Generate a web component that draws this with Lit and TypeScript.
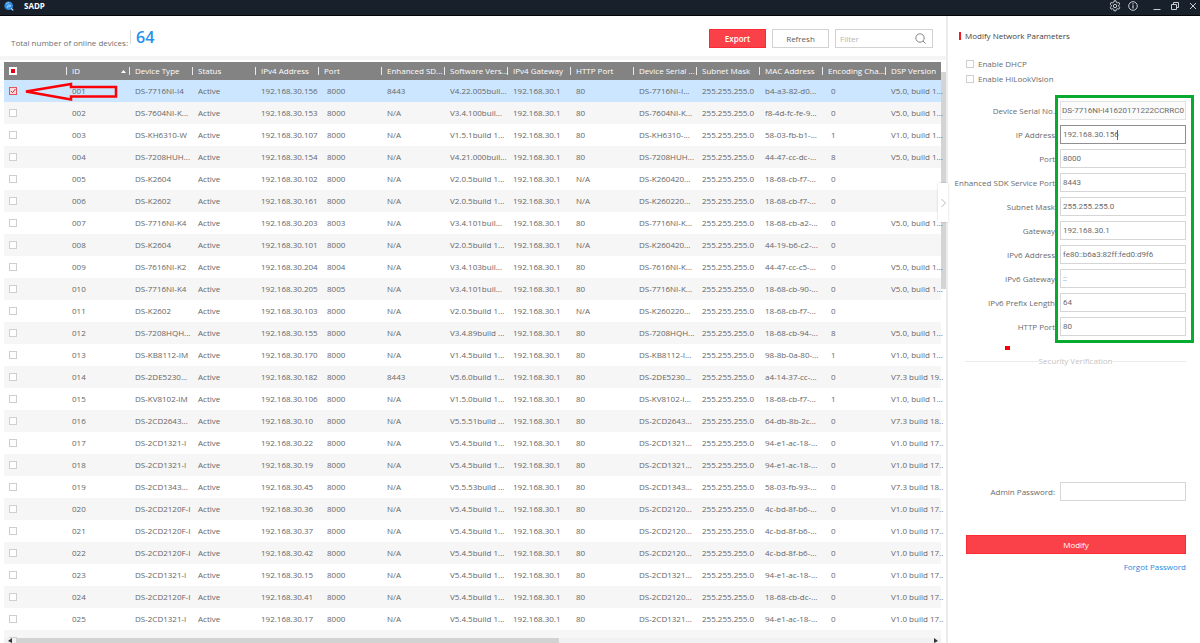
import { LitElement, html, css } from "lit";
import { customElement } from "lit/decorators.js";
import { classMap } from "lit/directives/class-map.js";

type Device = [
  type: string, host: number, port: string, sdk: string, software: string,
  http: string, serial: string, mac: string, channels: string, dsp: string,
];

const DEVICES: Device[] = [
  ["DS-7716NI-I4", 156, "8000", "8443", "V4.22.005buil...", "80", "DS-7716NI-I...", "b4-a3-82-d0...", "0", "V5.0, build 1..."],
  ["DS-7604NI-K...", 153, "8000", "N/A", "V3.4.100buil...", "80", "DS-7604NI-K...", "f8-4d-fc-fe-9...", "0", "V5.0, build 1..."],
  ["DS-KH6310-W", 107, "8000", "N/A", "V1.5.1build 1...", "80", "DS-KH6310-...", "58-03-fb-b1-...", "1", "V1.0, build 1..."],
  ["DS-7208HUH...", 154, "8000", "N/A", "V4.21.000buil...", "80", "DS-7208HUH...", "44-47-cc-dc-...", "8", "V5.0, build 1..."],
  ["DS-K2604", 102, "8000", "N/A", "V2.0.5build 1...", "N/A", "DS-K260420...", "18-68-cb-f7-...", "0", ""],
  ["DS-K2602", 161, "8000", "N/A", "V2.0.5build 1...", "N/A", "DS-K260220...", "18-68-cb-f7-...", "0", ""],
  ["DS-7716NI-K4", 203, "8003", "N/A", "V3.4.101buil...", "80", "DS-7716NI-K...", "18-68-cb-a2-...", "0", "V5.0, build 1..."],
  ["DS-K2604", 101, "8000", "N/A", "V2.0.5build 1...", "N/A", "DS-K260420...", "44-19-b6-c2-...", "0", ""],
  ["DS-7616NI-K2", 204, "8004", "N/A", "V3.4.103buil...", "80", "DS-7616NI-K...", "44-47-cc-c5-...", "0", "V5.0, build 1..."],
  ["DS-7716NI-K4", 205, "8005", "N/A", "V3.4.101buil...", "80", "DS-7716NI-K...", "18-68-cb-90-...", "0", "V5.0, build 1..."],
  ["DS-K2602", 103, "8000", "N/A", "V2.0.5build 1...", "N/A", "DS-K260220...", "18-68-cb-f7-...", "0", ""],
  ["DS-7208HQH...", 155, "8000", "N/A", "V3.4.89build ...", "80", "DS-7208HQH...", "18-68-cb-94-...", "8", "V5.0, build 1..."],
  ["DS-KB8112-IM", 170, "8000", "N/A", "V1.4.5build 1...", "80", "DS-KB8112-I...", "98-8b-0a-80-...", "1", "V1.0, build 1..."],
  ["DS-2DE5230...", 182, "8000", "8443", "V5.6.0build 1...", "80", "DS-2DE5230...", "a4-14-37-cc-...", "0", "V7.3 build 19.."],
  ["DS-KV8102-IM", 106, "8000", "N/A", "V1.5.0build 1...", "80", "DS-KV8102-I...", "18-68-cb-f7-...", "1", "V1.0, build 1..."],
  ["DS-2CD2643...", 10, "8000", "N/A", "V5.5.51build ...", "80", "DS-2CD2643...", "64-db-8b-2c...", "0", "V7.3 build 18.."],
  ["DS-2CD1321-I", 22, "8000", "N/A", "V5.4.5build 1...", "80", "DS-2CD1321...", "94-e1-ac-18-...", "0", "V1.0 build 17.."],
  ["DS-2CD1321-I", 19, "8000", "N/A", "V5.4.5build 1...", "80", "DS-2CD1321...", "94-e1-ac-18-...", "0", "V1.0 build 17.."],
  ["DS-2CD1343...", 45, "8000", "N/A", "V5.5.53build ...", "80", "DS-2CD1343...", "58-03-fb-93-...", "0", "V7.3 build 18.."],
  ["DS-2CD2120F-I", 36, "8000", "N/A", "V5.4.5build 1...", "80", "DS-2CD2120...", "4c-bd-8f-b6-...", "0", "V1.0 build 17.."],
  ["DS-2CD2120F-I", 37, "8000", "N/A", "V5.4.5build 1...", "80", "DS-2CD2120...", "4c-bd-8f-b6-...", "0", "V1.0 build 17.."],
  ["DS-2CD2120F-I", 42, "8000", "N/A", "V5.4.5build 1...", "80", "DS-2CD2120...", "4c-bd-8f-b6-...", "0", "V1.0 build 17.."],
  ["DS-2CD1321-I", 15, "8000", "N/A", "V5.4.5build 1...", "80", "DS-2CD1321...", "94-e1-ac-18-...", "0", "V1.0 build 17.."],
  ["DS-2CD2120F-I", 41, "8000", "N/A", "V5.4.5build 1...", "80", "DS-2CD2120...", "18-68-cb-dc-...", "0", "V1.0 build 17.."],
  ["DS-2CD1321-I", 17, "8000", "N/A", "V5.4.5build 1...", "80", "DS-2CD1321...", "94-e1-ac-18-...", "0", "V1.0 build 17.."],
];

const COLUMNS = [
  "ID", "Device Type", "Status", "IPv4 Address", "Port", "Enhanced SD...", "Software Vers...",
  "IPv4 Gateway", "HTTP Port", "Device Serial ...", "Subnet Mask", "MAC Address",
  "Encoding Cha...", "DSP Version",
];

const FIELDS: { id: string; label: string; value: string; kind?: string }[] = [
  { id: "serial", label: "Device Serial No.", value: "DS-7716NI-I41620171222CCRRC0", kind: "locked" },
  { id: "ip", label: "IP Address", value: "192.168.30.156", kind: "active" },
  { id: "port", label: "Port", value: "8000" },
  { id: "sdk", label: "Enhanced SDK Service Port", value: "8443" },
  { id: "mask", label: "Subnet Mask", value: "255.255.255.0" },
  { id: "gateway", label: "Gateway", value: "192.168.30.1" },
  { id: "ip6", label: "IPv6 Address", value: "fe80::b6a3:82ff:fed0:d9f6" },
  { id: "gateway6", label: "IPv6 Gateway", value: "::" },
  { id: "prefix6", label: "IPv6 Prefix Length", value: "64" },
  { id: "http", label: "HTTP Port", value: "80" },
];

const controls = css`
  :host, * { box-sizing: border-box; }
  button, input { font: inherit; color: inherit; margin: 0; }
  button { cursor: pointer; padding: 0; border: 0; background: none; }
  svg { display: block; }
  .tick {
    appearance: none;
    display: block;
    flex: none;
    width: 8px;
    height: 8px;
    border: 1px solid #cfcfcf;
    background: #fff;
  }
`;

@customElement("sadp-titlebar")
export class SadpTitlebar extends LitElement {
  static styles = [controls, css`
    :host {
      display: flex;
      align-items: center;
      height: 16px;
      padding: 0 3px 4px 4px;
      background: #18202b;
      border-bottom: 1px solid #050608;
      color: #fff;
    }
    .logo { width: 10px; height: 10px; }
    .name { margin: 0 auto 0 10px; font-size: 8px; line-height: 10px; font-weight: 700; }
    .tools { display: flex; align-items: center; gap: 7px; margin-right: 15px; color: #c9cdd2; }
    .window { display: flex; align-items: center; gap: 10px; color: #c9cdd2; }
  `];

  render() {
    return html`
      <svg class="logo" viewBox="0 0 10 10">
        <circle cx="4.7" cy="4.7" r="4.3" fill="#2f8fe6" />
        <path d="M2 3.2a3.4 3.4 0 0 1 3-1.600M3 6.400l1.400-2.600 2.600 1z" fill="none" stroke="#a9d8ff" stroke-width=".8" />
        <path d="M7.2 7.4l2 2" stroke="#d6e9fb" stroke-width="1.2" />
      </svg>
      <span class="name">SADP</span>
      <div class="tools">
        <button aria-label="Settings">
          <svg width="12" height="12" viewBox="0 0 12 12" fill="none" stroke="currentColor">
            <path d="M5 .8h2l.3 1.500 1 .6 1.500-.5 1 1.700-1.100 1v1.400l1.100 1-1 1.700-1.500-.5-1 .6-.3 1.500H5l-.3-1.500-1-.6-1.500.5-1-1.700 1.100-1V5.100l-1.100-1 1-1.700 1.500.5 1-.6z" stroke-linejoin="round" />
            <circle cx="6" cy="6" r="1.700" />
          </svg>
        </button>
        <button aria-label="About">
          <svg width="10" height="10" viewBox="0 0 10 10" fill="none" stroke="currentColor">
            <circle cx="5" cy="5" r="4.300" />
            <path d="M5 4.200v3.200M5 2.300v1.200" stroke-width="1.200" />
          </svg>
        </button>
      </div>
      <div class="window">
        <button aria-label="Minimize">
          <svg width="8" height="8" viewBox="0 0 8 8"><path d="M.5 7.500h7" stroke="currentColor" /></svg>
        </button>
        <button aria-label="Restore">
          <svg width="8" height="8" viewBox="0 0 8 8" fill="none" stroke="currentColor">
            <path d="M.5 2.500h5v5h-5zM2.500 2.500v-2h5v5h-2" />
          </svg>
        </button>
        <button aria-label="Close">
          <svg width="8" height="8" viewBox="0 0 8 8"><path d="M1 1l6 6M7 1L1 7" stroke="currentColor" /></svg>
        </button>
      </div>
    `;
  }
}

@customElement("sadp-devices")
export class SadpDevices extends LitElement {
  static styles = [controls, css`
    :host { display: flex; flex-direction: column; min-width: 0; min-height: 0; }
    .toolbar {
      display: flex;
      align-items: center;
      gap: 6px;
      height: 40px;
      padding: 5px 13px 0 11px;
      flex: none;
    }
    .summary { display: flex; align-items: flex-end; gap: 2px; margin-right: auto; }
    .total { font-size: 8px; line-height: 10px; color: #6e6e6e; }
    .count {
      padding-left: 5px;
      margin-bottom: 4px;
      border-left: 1px solid #dcdcdc;
      font-size: 16px;
      line-height: 14px;
      font-weight: 600;
      color: #2590ee;
    }
    .btn {
      width: 57px;
      height: 19px;
      border: 1px solid #d2d2d2;
      background: #fff;
      font-size: 8px;
      line-height: 12px;
      color: #5c5c5c;
    }
    .primary { border-color: #fb2a35; background: #fa4049; color: #fff; font-weight: 600; }
    .filter {
      display: flex;
      align-items: center;
      width: 98px;
      height: 19px;
      padding: 0 6px 0 4px;
      border: 1px solid #d2d2d2;
      color: #858585;
    }
    .filter input { flex: 1; min-width: 0; padding: 0; border: 0; outline: 0; font-size: 8px; line-height: 12px; }
    .filter input::placeholder { color: #b4b4b4; }
    .rule { height: 4px; flex: none; background: #f5f5f5; }
    .body { flex: 1; min-height: 0; display: flex; flex-direction: column; padding-top: 2px; }
    .view { flex: 1; min-height: 0; display: flex; }
    .scroll { flex: 1; min-width: 0; overflow-y: clip; overflow-x: visible; padding-left: 4px; position: relative; }
    .track { width: 5px; flex: none; padding-top: 10px; }
    .thumb { height: 217px; background: #d4d4d4; }
    table { width: 100%; table-layout: fixed; border-collapse: collapse; font-size: 8px; line-height: 12px; color: #666; }
    .col { width: 63px; }
    th, td { padding: 0 0 0 5px; text-align: left; white-space: nowrap; font-weight: 400; }
    th { height: 18px; background: #838383; color: #fff; }
    td { height: 22px; }
    th .label {
      display: flex;
      align-items: center;
      justify-content: space-between;
      height: 8px;
      margin-left: -6px;
      padding-left: 5px;
      padding-right: 4px;
      border-left: 1px solid #e9e9e9;
      line-height: 8px;
    }
    tbody tr:nth-child(even) { background: #f6f6f6; }
    tbody .selected { background: #cce6ff; }
    .indent { padding-left: 8px; }
    .some { border-color: #fff; background: linear-gradient(#e60012, #e60012) center / 4px 4px no-repeat #fff; }
    .mark { position: relative; display: block; width: 8px; height: 8px; }
    .mark svg { position: absolute; inset: 0; pointer-events: none; }
    .tick:checked { border-color: #e2545c; background: #fbdadd; }
    .arrow { position: absolute; left: 23px; top: 19px; }
    .hbar { display: flex; align-items: center; height: 5px; flex: none; margin: 0 5px 0 4px; background: #f1f1f3; }
    .hbar .fill { flex: none; width: 58%; height: 5px; background: #d2d2d2; }
    .hbar .end { margin-left: auto; }
  `];

  render() {
    return html`
      <div class="toolbar">
        <div class="summary">
          <span class="total">Total number of online devices:</span>
          <span class="count">64</span>
        </div>
        <button class="btn primary">Export</button>
        <button class="btn">Refresh</button>
        <label class="filter">
          <input type="text" placeholder="Filter" aria-label="Filter" />
          <svg width="11" height="11" viewBox="0 0 11 11" fill="none" stroke="currentColor">
            <circle cx="5" cy="5" r="4.200" /><path d="M8 8l2.600 2.600" />
          </svg>
        </label>
      </div>
      <div class="rule"></div>
      <div class="body">
        <div class="view">
          <div class="scroll">
            <table>
              <colgroup>
                <col class="col" />
                ${COLUMNS.slice(0, -1).map(() => html`<col class="col" />`)}
                <col />
              </colgroup>
              <thead>
                <tr>
                  <th><input class="tick some" type="checkbox" aria-label="Select all" /></th>
                  ${COLUMNS.map((name) => html`
                    <th><span class="label">${name}${name === "ID"
                      ? html`<svg width="5" height="3" viewBox="0 0 5 3"><path d="M0 3L2.500 0 5 3z" fill="#fff" /></svg>`
                      : ""}</span></th>`)}
                </tr>
              </thead>
              <tbody>
                ${DEVICES.map((device, i) => this.row(device, i))}
                <tr>
                  <td><input class="tick" type="checkbox" aria-label="Select device" /></td>
                  <td colspan="14"></td>
                </tr>
              </tbody>
            </table>
            <svg class="arrow" width="96" height="21" viewBox="0 0 96 21" fill="none">
              <path d="M3 10.500L48 3V6H93V15.500H48V18.500z" stroke="#fb0006" stroke-width="2.500" />
            </svg>
          </div>
          <div class="track"><div class="thumb"></div></div>
        </div>
        <div class="hbar">
          <svg width="12" height="5" viewBox="0 0 12 5"><path d="M8 0v5L4 3z" fill="#333" /></svg>
          <div class="fill"></div>
          <svg class="end" width="8" height="5" viewBox="0 0 8 5"><path d="M1 0v5l4-2z" fill="#333" /></svg>
        </div>
      </div>
    `;
  }

  private row(device: Device, index: number) {
    const [type, host, port, sdk, software, http, serial, mac, channels, dsp] = device;
    const id = String(index + 1).padStart(3, "0");
    const selected = index === 0;
    return html`
      <tr class=${classMap({ selected })}>
        <td>
          <span class="mark">
            <input class="tick" type="checkbox" aria-label="Select ${id}" ?checked=${selected} />
            ${selected
              ? html`<svg width="8" height="8" viewBox="0 0 8 8" fill="none"><path d="M2 4l1.500 1.700L6.300 2.200" stroke="#d9303a" /></svg>`
              : ""}
          </span>
        </td>
        <td>${id}</td>
        <td>${type}</td>
        <td>Active</td>
        <td>192.168.30.${host}</td>
        <td class="indent">${port}</td>
        <td>${sdk}</td>
        <td>${software}</td>
        <td>192.168.30.1</td>
        <td>${http}</td>
        <td>${serial}</td>
        <td>255.255.255.0</td>
        <td>${mac}</td>
        <td class="indent">${channels}</td>
        <td>${dsp}</td>
      </tr>
    `;
  }
}

@customElement("sadp-panel")
export class SadpPanel extends LitElement {
  static styles = [controls, css`
    :host {
      display: flex;
      flex-direction: column;
      position: relative;
      padding: 14px 14px 0 6px;
      border-left: 2px solid #ececec;
      font-size: 8px;
      line-height: 12px;
      color: #6b6b6b;
    }
    .title {
      display: flex;
      align-items: center;
      gap: 4px;
      margin: 0 0 14px 5px;
      font-size: 8px;
      font-weight: 400;
      color: #3f3f3f;
    }
    .title::before { content: ""; width: 2px; height: 8px; background: #ee1c25; }
    .option { display: flex; align-items: center; gap: 4px; height: 15px; margin-left: 12px; }
    .fields { display: grid; gap: 5px; position: relative; margin: 15px 0 0; }
    .field { display: grid; grid-template-columns: 1fr 126px; column-gap: 5px; align-items: center; position: relative; }
    .field label { text-align: right; white-space: nowrap; }
    .box {
      width: 100%;
      height: 19px;
      padding: 0 1px 0 2px;
      border: 1px solid #d6d6d6;
      border-radius: 0;
      outline: 0;
      background: #fff;
      font-family: Roboto, "Open Sans", sans-serif;
    }
    .locked { border-color: #e2e2e2; background: #fbfbfb; padding: 0 0 0 1px; }
    .active { border-color: #8f8f8f; }
    .caret { position: absolute; right: 68px; top: 5px; width: 1px; height: 10px; background: #666; }
    .frame { position: absolute; top: -6px; right: -8px; bottom: -7px; width: 139px; border: 3px solid #07ab2f; pointer-events: none; }
    .mark { width: 5px; height: 4px; margin: 10px 0 5px 51px; background: #f50008; }
    .divider { display: flex; align-items: center; color: #c4c4c4; margin-left: 11px; }
    .divider::before, .divider::after { content: ""; flex: 1; height: 1px; background: #ebebeb; }
    .password { margin: 115px 0 0; }
    .modify { height: 19px; margin: 34px 0 0 12px; border: 1px solid #fb2a35; background: #fa4049; color: #fff; }
    .forgot { align-self: flex-end; margin-top: 7px; color: #2f86e0; text-decoration: none; }
    .handle {
      position: absolute;
      left: -10px;
      top: 167px;
      width: 10px;
      height: 39px;
      display: grid;
      place-items: center;
      background: #fff;
      box-shadow: 0 0 2px rgba(0, 0, 0, 0.2);
      color: #b9b9b9;
    }
  `];

  render() {
    return html`
      <h2 class="title">Modify Network Parameters</h2>
      <label class="option"><input class="tick" type="checkbox" />Enable DHCP</label>
      <label class="option"><input class="tick" type="checkbox" />Enable HiLookVision</label>
      <div class="fields">
        ${FIELDS.map((f) => html`
          <div class="field">
            <label for=${f.id}>${f.label}</label>
            <input
              id=${f.id}
              type="text"
              class=${classMap({ box: true, locked: f.kind === "locked", active: f.kind === "active" })}
              .value=${f.value}
              ?readonly=${f.kind === "locked"}
            />
            ${f.kind === "active" ? html`<span class="caret"></span>` : ""}
          </div>`)}
        <div class="frame"></div>
      </div>
      <div class="mark"></div>
      <div class="divider">Security Verification</div>
      <div class="field password">
        <label for="password">Admin Password:</label>
        <input id="password" class="box" type="password" />
      </div>
      <button class="modify">Modify</button>
      <a class="forgot" href="#forgot">Forgot Password</a>
      <button class="handle" aria-label="Collapse panel">
        <svg width="5" height="10" viewBox="0 0 5 10" fill="none" stroke="currentColor"><path d="M.5 1L4.500 5 .5 9" /></svg>
      </button>
    `;
  }
}

@customElement("app-root")
export class AppRoot extends LitElement {
  static styles = css`
    :host {
      display: flex;
      flex-direction: column;
      height: 100vh;
      overflow: hidden;
      background: #fff;
      font-family: "Open Sans", "Noto Sans", sans-serif;
    }
    .main { flex: 1; min-height: 0; display: grid; grid-template-columns: minmax(0, 1fr) 254px; grid-template-rows: minmax(0, 1fr); }
  `;

  render() {
    return html`
      <sadp-titlebar></sadp-titlebar>
      <div class="main">
        <sadp-devices></sadp-devices>
        <sadp-panel></sadp-panel>
      </div>
    `;
  }
}
